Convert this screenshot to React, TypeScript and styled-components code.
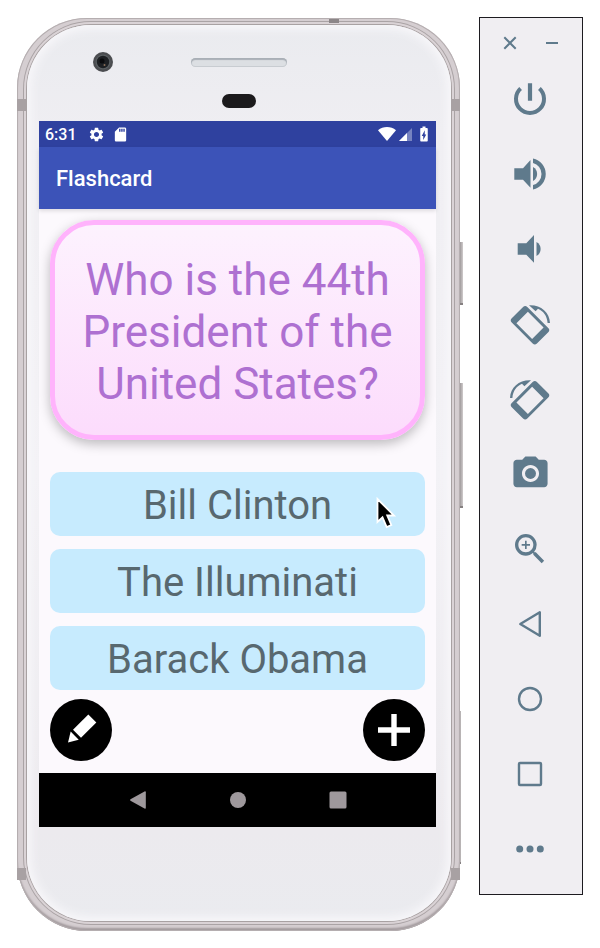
import React from "react";
import styled, { createGlobalStyle } from "styled-components";
import {
  MdBatteryChargingFull,
  MdPhotoCamera,
  MdSdCard,
  MdSettings,
  MdZoomIn,
} from "react-icons/md";

const GlobalStyle = createGlobalStyle`
  *, *::before, *::after { box-sizing: border-box; }
  body { margin: 0; background: #ffffff; font-family: Roboto, sans-serif; }
  button { font: inherit; border: 0; padding: 0; background: none; cursor: pointer; }
  svg { display: block; }
`;

const slate = "#5f7a8c";

const Page = styled.div`
  display: flex;
  align-items: flex-start;
  gap: 19px;
  padding: 17px;
`;

/* ---------- phone shell ---------- */

const Phone = styled.main`
  position: relative;
  flex: 1;
  min-width: 0;
  margin-top: 1px;
  padding: 7px 9px 10px 10px;
  border-radius: 70px;
  background: #d5ced1;
  box-shadow: inset 0 0 0 1px #b5aeb0, inset 0 -3px 2px #a39b9e;
`;

const Face = styled.div`
  border-radius: 64px;
  background: linear-gradient(#eaebef, #efeef2 12%, #f3f2f6 50%, #eceaee 90%, #eaebef);
  box-shadow: 0 0 0 1px #a8a1a2, 0 0 0 3px #dad3d6, 0 0 0 4px #aaa3a5,
    inset 0 0 10px 4px #f8f7fa;
`;

const SideKey = styled.span<{ $top: number; $height: number; $out: number }>`
  position: absolute;
  top: ${(p) => p.$top}px;
  right: -${(p) => p.$out}px;
  width: ${(p) => p.$out}px;
  height: ${(p) => p.$height}px;
  background: linear-gradient(90deg, #a09b9c, #d0cccd);
  border-bottom: 2px solid #858081;
`;

const Antenna = styled.span<{ $side: "left" | "right"; $end: "top" | "bottom" }>`
  position: absolute;
  ${(p) => p.$side}: 0;
  ${(p) => (p.$end === "top" ? "top: 81px" : "bottom: 51px")};
  width: 9px;
  height: 12px;
  background: #a8a1a3;
`;

const TopAntenna = styled.span`
  position: absolute;
  top: 1px;
  right: 121px;
  width: 10px;
  height: 4px;
  background: #8c8688;
`;

const Bezel = styled.div`
  height: 96px;
  padding-top: 26px;
`;

const BezelRow = styled.div`
  display: grid;
  grid-template-columns: 1fr 96px 1fr;
  align-items: center;
  height: 22px;
`;

const Lens = styled.svg`
  margin-left: 66px;
`;

const Speaker = styled.div`
  height: 9px;
  border-radius: 5px;
  background: #dcdfe3;
  box-shadow: inset 0 2px 1px #a9afb6, inset 0 0 0 1px #c8ccd1;
`;

const Sensor = styled.div`
  width: 34px;
  height: 14px;
  margin: 21px auto 0;
  border-radius: 7px;
  background: #1b1a1c;
`;

const Chin = styled.div`
  height: 94px;
`;

/* ---------- app screen ---------- */

const Screen = styled.div`
  margin: 0 15px 0 12px;
  background: #fcf9fd;
`;

const StatusBar = styled.div`
  display: flex;
  align-items: center;
  height: 26px;
  padding: 0 3px 0 6px;
  color: #ffffff;
  background: #2f419f;
  font-size: 16px;
  font-weight: 500;
`;

const StatusGroup = styled.div<{ $push?: boolean; $gap: number }>`
  display: flex;
  align-items: center;
  gap: ${(p) => p.$gap}px;
  margin-left: ${(p) => (p.$push ? "auto" : "11px")};
`;

const AppBar = styled.header`
  position: relative;
  display: flex;
  align-items: center;
  height: 62px;
  padding: 2px 17px 0;
  color: #ffffff;
  background: #3c53b8;
  box-shadow: 0 2px 4px rgba(0, 0, 0, 0.12);
`;

const Title = styled.h1`
  margin: 0;
  font-size: 22px;
  font-weight: 500;
  line-height: 28px;
`;

const Content = styled.section`
  padding: 11px 11px 12px;
`;

const Card = styled.h2`
  display: flex;
  align-items: center;
  justify-content: center;
  min-height: 220px;
  margin: 0 0 32px;
  padding: 4px 20px 0;
  border: 5px solid #ffb3fc;
  border-radius: 44px;
  background: linear-gradient(#fdf2fe, #fcdcfc);
  box-shadow: 0 4px 12px rgba(0, 0, 0, 0.26);
  color: #ae70d1;
  font-size: 44px;
  font-weight: 400;
  line-height: 52px;
  text-align: center;
`;

const Answers = styled.div`
  display: grid;
  gap: 13px;
`;

const Answer = styled.button`
  position: relative;
  height: 64px;
  padding: 4px 0 0;
  border-radius: 10px;
  background: #c7ebfe;
  color: #58686f;
  font-size: 40px;
  line-height: 60px;
`;

const Pointer = styled.svg`
  position: absolute;
  top: 24px;
  right: 28px;
`;

const Actions = styled.div`
  display: flex;
  justify-content: space-between;
  margin-top: 9px;
`;

const RoundButton = styled.button`
  width: 62px;
  height: 62px;
  border-radius: 50%;
  background: #000000;
`;

const NavBar = styled.nav`
  display: grid;
  grid-template-columns: repeat(3, 100px);
  justify-content: center;
  height: 54px;
  background: #000000;
`;

const NavButton = styled.button`
  display: grid;
  place-items: center;
`;

/* ---------- emulator toolbar ---------- */

const Toolbar = styled.aside`
  width: 104px;
  padding-bottom: 8px;
  border: 1px solid #1d1b20;
  background: #f0eef2;
  color: ${slate};
`;

const WindowControls = styled.div`
  display: flex;
  justify-content: center;
  gap: 18px;
  height: 43px;
  padding-top: 13px;
`;

const WindowButton = styled.button`
  width: 24px;
  height: 24px;
  color: ${slate};
`;

const ToolButton = styled.button`
  display: grid;
  place-items: center;
  width: 100%;
  height: 75px;
  padding-right: 2px;
  color: ${slate};
`;

const Glyph = ({ children }: { children: React.ReactNode }) => (
  <svg width="40" height="40" viewBox="0 0 40 40" fill="currentColor" overflow="visible">
    {children}
  </svg>
);

const Line = ({ children }: { children: React.ReactNode }) => (
  <g fill="none" stroke="currentColor" strokeWidth="2.4" strokeLinejoin="round">
    {children}
  </g>
);

const RotateShape = () => (
  <>
    <path
      fillRule="evenodd"
      transform="rotate(-45 20 21.3)"
      d="M12 3.500h16a3 3 0 0 1 3 3v29.600a3 3 0 0 1-3 3H12a3 3 0 0 1-3-3V6.500a3 3 0 0 1 3-3zM11.900 10.200v22.200h16.200v-22.200z"
    />
    <path d="M19 1.200C30.500 .6 39.600 8 40 19h-2.400C37 11.800 33.300 7 28 4.800L25.600 7.200z" />
  </>
);

const tools: { label: string; icon: React.ReactNode }[] = [
  {
    label: "Power",
    icon: (
      <Glyph>
        <path d="M10.600 9.600A14 14 0 1 0 29.400 9.600" fill="none" stroke="currentColor" strokeWidth="4" />
        <path d="M17.900 4.200h4.200v17.600h-4.200z" />
      </Glyph>
    ),
  },
  {
    label: "Volume up",
    icon: (
      <Glyph>
        <path d="M4.300 14.300H13L20.500 6V33.700L13 25.700H4.300z" />
        <path d="M23 13a8 8 0 0 1 0 14z" />
        <path d="M23 4.500a15.800 15.800 0 0 1 0 31v-4.400a11.500 11.500 0 0 0 0-22.200z" />
      </Glyph>
    ),
  },
  {
    label: "Volume down",
    icon: (
      <Glyph>
        <path d="M7.700 14.300H16.300L24 6V33.700L16.300 25.700H7.700z" />
        <path d="M26.500 13a8 8 0 0 1 0 14z" />
      </Glyph>
    ),
  },
  { label: "Rotate left", icon: <Glyph><RotateShape /></Glyph> },
  {
    label: "Rotate right",
    icon: (
      <Glyph>
        <g transform="matrix(-1 0 0 1 40 0)">
          <RotateShape />
        </g>
      </Glyph>
    ),
  },
  { label: "Take screenshot", icon: <MdPhotoCamera size={41} /> },
  { label: "Zoom", icon: <MdZoomIn size={40} /> },
  { label: "Back", icon: <Glyph><Line><path d="M10.300 20L29.800 8.300V31.700z" /></Line></Glyph> },
  { label: "Home", icon: <Glyph><Line><circle cx="20" cy="20" r="11" /></Line></Glyph> },
  {
    label: "Overview",
    icon: <Glyph><Line><rect x="9" y="9" width="22" height="22" rx="1" /></Line></Glyph>,
  },
  {
    label: "More",
    icon: (
      <Glyph>
        <circle cx="9.700" cy="20" r="3.500" />
        <circle cx="20" cy="20" r="3.500" />
        <circle cx="30.300" cy="20" r="3.500" />
      </Glyph>
    ),
  },
];

const answers = ["Bill Clinton", "The Illuminati", "Barack Obama"];

export default function App() {
  return (
    <>
      <GlobalStyle />
      <Page>
        <Phone>
          <SideKey $top={224} $height={63} $out={3} />
          <SideKey $top={365} $height={125} $out={3} />
          <SideKey $top={693} $height={153} $out={1} />
          <TopAntenna />
          <Antenna $side="left" $end="top" />
          <Antenna $side="right" $end="top" />
          <Antenna $side="left" $end="bottom" />
          <Antenna $side="right" $end="bottom" />
          <Face>
            <Bezel>
              <BezelRow>
                <Lens width="20" height="20" viewBox="0 0 20 20" aria-hidden="true">
                  <circle cx="10" cy="10" r="10" fill="#4b4d50" />
                  <circle cx="10" cy="10" r="7.500" fill="#5a5f62" />
                  <circle cx="10" cy="10" r="6.200" fill="#1d2023" />
                  <circle cx="9" cy="9" r="2.500" fill="#0a0b0d" />
                  <circle cx="11.500" cy="13" r="1" fill="#8a6f58" />
                </Lens>
                <Speaker />
              </BezelRow>
              <Sensor />
            </Bezel>

            <Screen>
              <StatusBar>
                <span>6:31</span>
                <StatusGroup $gap={7}>
                  <MdSettings size={17} />
                  <MdSdCard size={17} />
                </StatusGroup>
                <StatusGroup $push $gap={3}>
                  <svg width="18" height="14" viewBox="0 0 18 14" fill="#fff">
                    <path d="M0 3.200C5-1 13-1 18 3.200L9 14z" />
                  </svg>
                  <svg width="13" height="14" viewBox="0 0 13 14" fill="#fff">
                    <path d="M0 14L13 1v13z" opacity=".35" />
                    <path d="M0 14L8 6v8z" />
                  </svg>
                  <MdBatteryChargingFull size={18} />
                </StatusGroup>
              </StatusBar>
              <AppBar>
                <Title>Flashcard</Title>
              </AppBar>

              <Content>
                <Card>Who is the 44th President of the United States?</Card>
                <Answers>
                  {answers.map((text, i) => (
                    <Answer key={text} type="button">
                      {text}
                      {i === 0 && (
                        <Pointer width="22" height="34" viewBox="0 0 22 34" aria-hidden="true">
                          <path
                            d="M2.500 3V26L7.500 21.300L11.700 31L16.300 29L12.200 19.500H19z"
                            fill="#000"
                            stroke="#fff"
                            strokeWidth="1.800"
                          />
                        </Pointer>
                      )}
                    </Answer>
                  ))}
                </Answers>
                <Actions>
                  <RoundButton type="button" aria-label="Edit card">
                    <svg width="62" height="62" viewBox="0 0 62 62" fill="#fff">
                      <path d="M38.300 15.500L46.300 23.500L31 38.800L23 30.800z" />
                      <path d="M18 43.500L20.700 32.500L28.700 40.800z" />
                    </svg>
                  </RoundButton>
                  <RoundButton type="button" aria-label="Add card">
                    <svg width="62" height="62" viewBox="0 0 62 62" fill="#fff">
                      <path d="M28.300 15h5.400v13.300H47v5.400H33.700V47h-5.400V33.700H15v-5.400h13.300z" />
                    </svg>
                  </RoundButton>
                </Actions>
              </Content>

              <NavBar>
                <NavButton type="button" aria-label="Back">
                  <svg width="18" height="18" viewBox="0 0 18 18" fill="#9e989c">
                    <path d="M1.500 8.300L15.500 .5Q16.800 0 16.800 1.300V16.700Q16.800 18 15.500 17.500L1.500 9.700Q.5 9 1.500 8.300z" />
                  </svg>
                </NavButton>
                <NavButton type="button" aria-label="Home">
                  <svg width="18" height="18" viewBox="0 0 18 18" fill="#9e989c">
                    <circle cx="9" cy="9" r="8" />
                  </svg>
                </NavButton>
                <NavButton type="button" aria-label="Overview">
                  <svg width="18" height="18" viewBox="0 0 18 18" fill="#9e989c">
                    <rect x=".5" y=".5" width="17" height="17" rx="1.500" />
                  </svg>
                </NavButton>
              </NavBar>
            </Screen>
            <Chin />
          </Face>
        </Phone>

        <Toolbar>
          <WindowControls>
            <WindowButton type="button" aria-label="Close">
              <svg width="24" height="24" viewBox="0 0 24 24" stroke="currentColor" strokeWidth="2">
                <path d="M6.300 6.300L17.700 17.700M17.700 6.300L6.300 17.700" />
              </svg>
            </WindowButton>
            <WindowButton type="button" aria-label="Minimize">
              <svg width="24" height="24" viewBox="0 0 24 24" stroke="currentColor" strokeWidth="2">
                <path d="M6 12H18" />
              </svg>
            </WindowButton>
          </WindowControls>
          {tools.map((tool) => (
            <ToolButton key={tool.label} type="button" aria-label={tool.label}>
              {tool.icon}
            </ToolButton>
          ))}
        </Toolbar>
      </Page>
    </>
  );
}
